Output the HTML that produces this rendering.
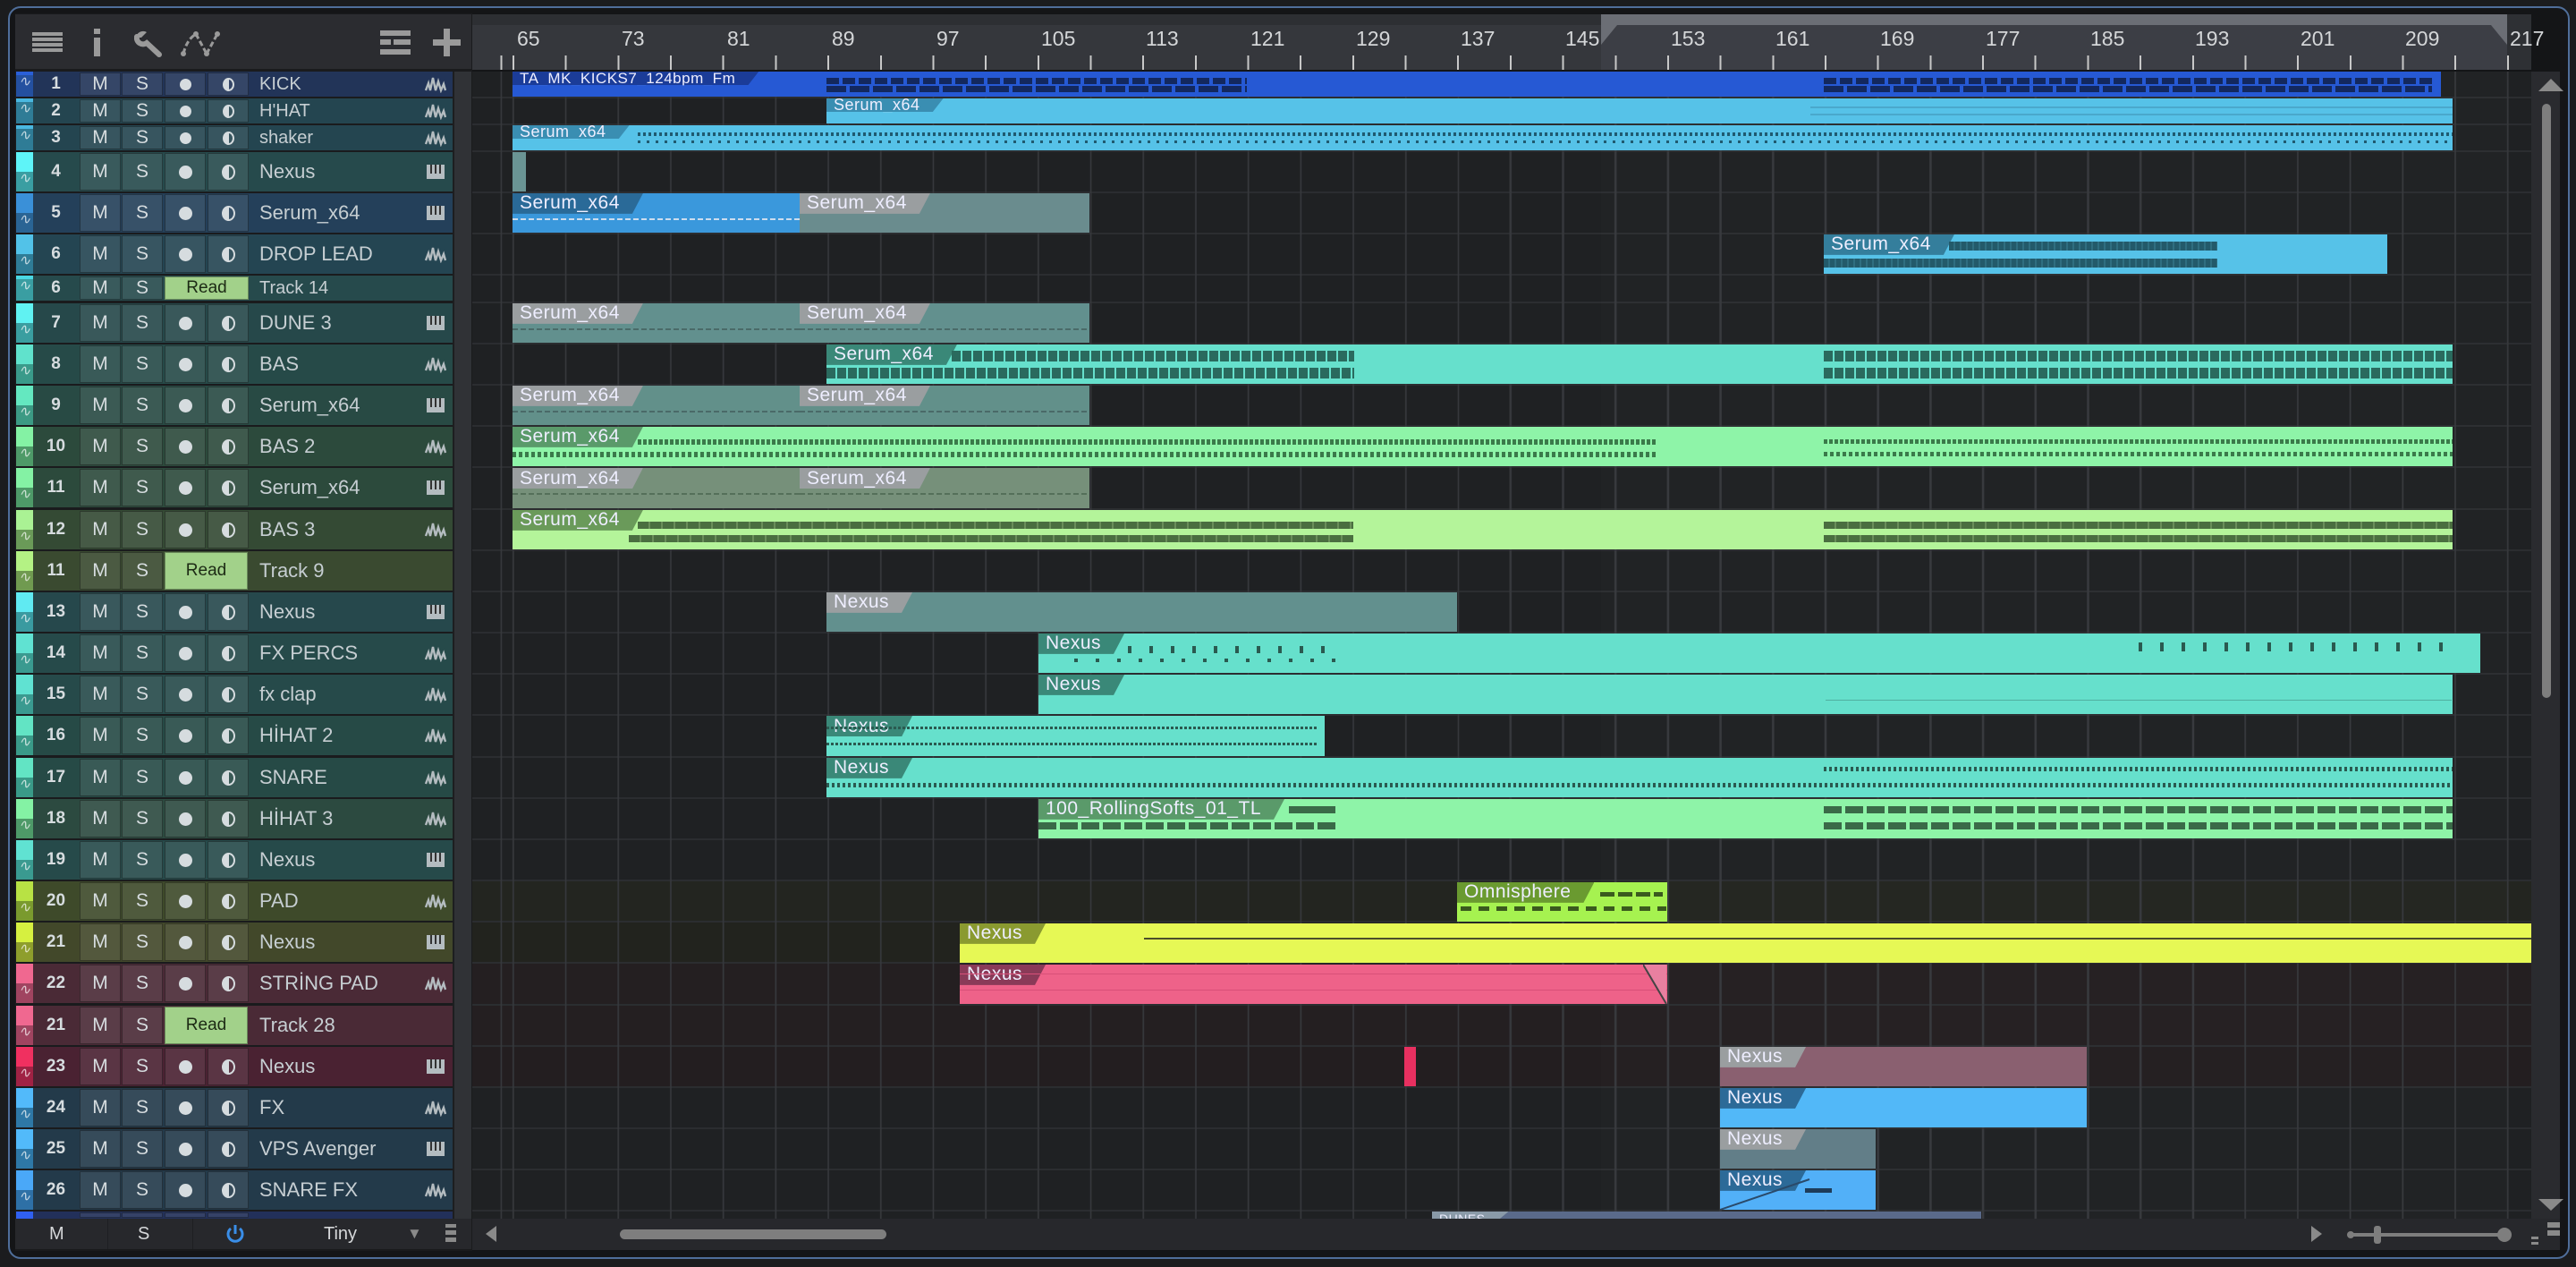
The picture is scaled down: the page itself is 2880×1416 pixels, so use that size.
<!DOCTYPE html>
<html><head><meta charset="utf-8"><style>
*{margin:0;padding:0;box-sizing:border-box}
body{width:2880px;height:1416px;background:#1b1c1e;position:relative;overflow:hidden;font-family:"Liberation Sans",sans-serif}
.a{position:absolute}
#frame{left:9px;top:7px;width:2864px;height:1400px;border:2px solid #4f6e9a;border-radius:14px;background:#141517}
#lp{left:17px;top:15px;width:511px;height:1383px;background:#1a1b1d}
#hd{left:17px;top:16px;width:510px;height:61px;background:#2b2c30}
.r{position:absolute;left:18px;width:488px;background:var(--b);color:#c9d0d4}
.r .st{position:absolute;left:0;top:0;width:19px;height:50%;background:var(--c)}
.r .sb{position:absolute;left:0;top:50%;width:19px;bottom:0;background:var(--d);color:rgba(255,255,255,.7);font-size:16px;line-height:100%;text-align:center}
.r.s .st{height:16%}.r.s .sb{top:16%}
.r .n{position:absolute;left:19px;width:51px;top:0;bottom:0;display:flex;align-items:center;justify-content:center;font-weight:bold;font-size:19px;color:#d6dcdf}
.r .bt{position:absolute;top:1px;bottom:1px;width:46px;background:rgba(255,255,255,.09);border:1px solid rgba(0,0,0,.35);display:flex;align-items:center;justify-content:center;font-size:21px;color:#d6dcdf}
.r .rd{background:#a2d18a;color:#1c2a14;width:94px;font-size:19px}
.dot{display:block;width:15px;height:15px;border-radius:50%;background:#d6dcdf}
.mon{display:block;width:15px;height:17px;border-radius:50%;border:2px solid #d6dcdf;background:linear-gradient(90deg,#d6dcdf 55%,transparent 55%)}
.r.s .dot{width:13px;height:13px}.r.s .mon{width:13px;height:15px}
.r .nm{position:absolute;left:272px;top:0;bottom:0;display:flex;align-items:center;font-size:22px;color:#c6ced2}
.r.s .nm{font-size:20px}.r.s .n{font-size:19px}
.r .ic{position:absolute;left:456px;top:50%;margin-top:-10px;width:26px;height:20px}
.sc{position:absolute;left:506px;width:21px;background:#303236;border-left:2px solid #1d1e20}
#ar{left:528px;top:80px;width:2302px;height:1282px;background:#1f2123;overflow:hidden}
.band{position:absolute;left:0;width:2302px;border-bottom:2px solid #2b2d30}
#grid{left:0;top:0;width:2302px;height:1282px;background:repeating-linear-gradient(90deg,#36383c 0 2px,transparent 2px 58.68px);background-position:45px 0}
.c{position:absolute;overflow:hidden}
.c .h{position:absolute;left:0;top:0;height:52%;padding:0 26px 0 8px;font-size:21px;color:#eef;display:flex;align-items:center;clip-path:polygon(0 0,100% 0,calc(100% - 12px) 100%,0 100%);white-space:nowrap;letter-spacing:.5px}
.s28 .h{font-size:18px;height:55%}
.w{position:absolute;height:7px}
#ru{left:528px;top:16px;width:2302px;height:62px;background:#35373c}
.rn{position:absolute;top:14px;font-size:23px;color:#d4d6d8}
</style></head><body>
<div id="frame" class="a"></div>
<div id="lp" class="a"></div>
<div id="hd" class="a">
<svg class="a" style="left:19px;top:20px" width="34" height="22"><g fill="#9a9a9a"><rect y="0" width="34" height="4"/><rect y="6" width="34" height="4"/><rect y="12" width="34" height="4"/><rect y="18" width="34" height="4"/></g></svg>
<svg class="a" style="left:88px;top:16px" width="8" height="31"><rect width="7" height="6" fill="#9a9a9a"/><rect y="10" width="7" height="21" fill="#9a9a9a"/></svg>
<svg class="a" style="left:133px;top:18px" width="32" height="30"><path d="M3 7a7 7 0 0 0 11 7l14 13" stroke="#9a9a9a" stroke-width="6" fill="none" stroke-linecap="round"/><path d="M2 8a8 8 0 0 1 12-6l-6 6z" fill="#9a9a9a"/></svg>
<svg class="a" style="left:184px;top:16px" width="48" height="32"><path d="M4 28Q8 12 18 6M18 6L30 28M30 28L42 6" stroke="#9a9a9a" stroke-width="3" fill="none" stroke-dasharray="6 3"/><g fill="#9a9a9a"><circle cx="4" cy="28" r="3"/><circle cx="18" cy="6" r="3"/><circle cx="30" cy="28" r="3"/><circle cx="42" cy="6" r="3"/></g></svg>
<svg class="a" style="left:408px;top:18px" width="34" height="27"><g fill="#9a9a9a"><rect width="34" height="6"/><rect y="10" width="12" height="6"/><rect x="15" y="10" width="19" height="6"/><rect y="21" width="34" height="6"/></g></svg>
<svg class="a" style="left:467px;top:16px" width="31" height="31"><rect x="12" width="7" height="31" fill="#9a9a9a"/><rect y="12" width="31" height="7" fill="#9a9a9a"/></svg>
</div>
<svg width="0" height="0" style="position:absolute"><defs>
<symbol id="aw" viewBox="0 0 26 20"><path d="M2 17L5 9L7 17L10 3L13 17L16 7L19 17L22 10L24 17" stroke="#b4bcc0" stroke-width="2.4" fill="none"/></symbol>
<symbol id="pi" viewBox="0 0 26 20"><rect x="3" y="2" width="20" height="16" fill="#b4bcc0"/><g stroke="#333" stroke-width="2"><path d="M8 2v10M13 2v10M18 2v10"/></g></symbol>
</defs></svg>

<div class="r s" style="top:80px;height:28px;--b:#223458;--c:#2a5fd8;--d:#2450a0"><i class="st"></i><i class="sb">∿</i><b class="n">1</b><span class="bt" style="left:71px">M</span><span class="bt" style="left:118px">S</span><span class="bt" style="left:166px"><i class="dot"></i></span><span class="bt" style="left:214px"><i class="mon"></i></span><span class="nm">KICK</span><svg class="ic"><use href="#aw"/></svg></div>
<div class="r s" style="top:110px;height:28px;--b:#244550;--c:#4ab8e0;--d:#2f7c96"><i class="st"></i><i class="sb">∿</i><b class="n">2</b><span class="bt" style="left:71px">M</span><span class="bt" style="left:118px">S</span><span class="bt" style="left:166px"><i class="dot"></i></span><span class="bt" style="left:214px"><i class="mon"></i></span><span class="nm">H'HAT</span><svg class="ic"><use href="#aw"/></svg></div>
<div class="r s" style="top:140px;height:28px;--b:#244550;--c:#4ab8e0;--d:#2f7c96"><i class="st"></i><i class="sb">∿</i><b class="n">3</b><span class="bt" style="left:71px">M</span><span class="bt" style="left:118px">S</span><span class="bt" style="left:166px"><i class="dot"></i></span><span class="bt" style="left:214px"><i class="mon"></i></span><span class="nm">shaker</span><svg class="ic"><use href="#aw"/></svg></div>
<div class="r" style="top:170px;height:44px;--b:#264a4c;--c:#5ef4f8;--d:#3a9ea2"><i class="st"></i><i class="sb">∿</i><b class="n">4</b><span class="bt" style="left:71px">M</span><span class="bt" style="left:118px">S</span><span class="bt" style="left:166px"><i class="dot"></i></span><span class="bt" style="left:214px"><i class="mon"></i></span><span class="nm">Nexus</span><svg class="ic"><use href="#pi"/></svg></div>
<div class="r" style="top:216px;height:44px;--b:#24405a;--c:#3a90d8;--d:#2a6494"><i class="st"></i><i class="sb">∿</i><b class="n">5</b><span class="bt" style="left:71px">M</span><span class="bt" style="left:118px">S</span><span class="bt" style="left:166px"><i class="dot"></i></span><span class="bt" style="left:214px"><i class="mon"></i></span><span class="nm">Serum_x64</span><svg class="ic"><use href="#pi"/></svg></div>
<div class="r" style="top:262px;height:44px;--b:#244552;--c:#52c2e8;--d:#2f7c96"><i class="st"></i><i class="sb">∿</i><b class="n">6</b><span class="bt" style="left:71px">M</span><span class="bt" style="left:118px">S</span><span class="bt" style="left:166px"><i class="dot"></i></span><span class="bt" style="left:214px"><i class="mon"></i></span><span class="nm">DROP LEAD</span><svg class="ic"><use href="#aw"/></svg></div>
<div class="r s" style="top:308px;height:28px;--b:#264a4c;--c:#4ad8e4;--d:#3a9ea2"><i class="st"></i><i class="sb">∿</i><b class="n">6</b><span class="bt" style="left:71px">M</span><span class="bt" style="left:118px">S</span><span class="bt rd" style="left:166px">Read</span><span class="nm">Track 14</span></div>
<div class="r" style="top:339px;height:44px;--b:#26484a;--c:#60f2f2;--d:#3a9ea0"><i class="st"></i><i class="sb">∿</i><b class="n">7</b><span class="bt" style="left:71px">M</span><span class="bt" style="left:118px">S</span><span class="bt" style="left:166px"><i class="dot"></i></span><span class="bt" style="left:214px"><i class="mon"></i></span><span class="nm">DUNE 3</span><svg class="ic"><use href="#pi"/></svg></div>
<div class="r" style="top:385px;height:44px;--b:#264a48;--c:#60e2cc;--d:#3a9a8a"><i class="st"></i><i class="sb">∿</i><b class="n">8</b><span class="bt" style="left:71px">M</span><span class="bt" style="left:118px">S</span><span class="bt" style="left:166px"><i class="dot"></i></span><span class="bt" style="left:214px"><i class="mon"></i></span><span class="nm">BAS</span><svg class="ic"><use href="#aw"/></svg></div>
<div class="r" style="top:431px;height:44px;--b:#284a44;--c:#64e8c0;--d:#3c9a84"><i class="st"></i><i class="sb">∿</i><b class="n">9</b><span class="bt" style="left:71px">M</span><span class="bt" style="left:118px">S</span><span class="bt" style="left:166px"><i class="dot"></i></span><span class="bt" style="left:214px"><i class="mon"></i></span><span class="nm">Serum_x64</span><svg class="ic"><use href="#pi"/></svg></div>
<div class="r" style="top:477px;height:44px;--b:#2c4a3c;--c:#84f2a4;--d:#4e9a68"><i class="st"></i><i class="sb">∿</i><b class="n">10</b><span class="bt" style="left:71px">M</span><span class="bt" style="left:118px">S</span><span class="bt" style="left:166px"><i class="dot"></i></span><span class="bt" style="left:214px"><i class="mon"></i></span><span class="nm">BAS 2</span><svg class="ic"><use href="#aw"/></svg></div>
<div class="r" style="top:523px;height:44px;--b:#2c4a3c;--c:#84f2a4;--d:#4e9a68"><i class="st"></i><i class="sb">∿</i><b class="n">11</b><span class="bt" style="left:71px">M</span><span class="bt" style="left:118px">S</span><span class="bt" style="left:166px"><i class="dot"></i></span><span class="bt" style="left:214px"><i class="mon"></i></span><span class="nm">Serum_x64</span><svg class="ic"><use href="#pi"/></svg></div>
<div class="r" style="top:570px;height:44px;--b:#344a34;--c:#aaf294;--d:#6a9a58"><i class="st"></i><i class="sb">∿</i><b class="n">12</b><span class="bt" style="left:71px">M</span><span class="bt" style="left:118px">S</span><span class="bt" style="left:166px"><i class="dot"></i></span><span class="bt" style="left:214px"><i class="mon"></i></span><span class="nm">BAS 3</span><svg class="ic"><use href="#aw"/></svg></div>
<div class="r" style="top:616px;height:44px;--b:#3a4a30;--c:#b4f284;--d:#709a50"><i class="st"></i><i class="sb">∿</i><b class="n">11</b><span class="bt" style="left:71px">M</span><span class="bt" style="left:118px">S</span><span class="bt rd" style="left:166px;width:93px">Read</span><span class="nm">Track 9</span></div>
<div class="r" style="top:662px;height:44px;--b:#26484c;--c:#60eaf2;--d:#3a9aa0"><i class="st"></i><i class="sb">∿</i><b class="n">13</b><span class="bt" style="left:71px">M</span><span class="bt" style="left:118px">S</span><span class="bt" style="left:166px"><i class="dot"></i></span><span class="bt" style="left:214px"><i class="mon"></i></span><span class="nm">Nexus</span><svg class="ic"><use href="#pi"/></svg></div>
<div class="r" style="top:708px;height:44px;--b:#264a4a;--c:#60e2d2;--d:#3a9a90"><i class="st"></i><i class="sb">∿</i><b class="n">14</b><span class="bt" style="left:71px">M</span><span class="bt" style="left:118px">S</span><span class="bt" style="left:166px"><i class="dot"></i></span><span class="bt" style="left:214px"><i class="mon"></i></span><span class="nm">FX PERCS</span><svg class="ic"><use href="#aw"/></svg></div>
<div class="r" style="top:754px;height:44px;--b:#264a4a;--c:#60e2d2;--d:#3a9a90"><i class="st"></i><i class="sb">∿</i><b class="n">15</b><span class="bt" style="left:71px">M</span><span class="bt" style="left:118px">S</span><span class="bt" style="left:166px"><i class="dot"></i></span><span class="bt" style="left:214px"><i class="mon"></i></span><span class="nm">fx clap</span><svg class="ic"><use href="#aw"/></svg></div>
<div class="r" style="top:800px;height:44px;--b:#264a46;--c:#62e4c4;--d:#3a9a88"><i class="st"></i><i class="sb">∿</i><b class="n">16</b><span class="bt" style="left:71px">M</span><span class="bt" style="left:118px">S</span><span class="bt" style="left:166px"><i class="dot"></i></span><span class="bt" style="left:214px"><i class="mon"></i></span><span class="nm">HİHAT 2</span><svg class="ic"><use href="#aw"/></svg></div>
<div class="r" style="top:847px;height:44px;--b:#264a46;--c:#62e4c4;--d:#3a9a88"><i class="st"></i><i class="sb">∿</i><b class="n">17</b><span class="bt" style="left:71px">M</span><span class="bt" style="left:118px">S</span><span class="bt" style="left:166px"><i class="dot"></i></span><span class="bt" style="left:214px"><i class="mon"></i></span><span class="nm">SNARE</span><svg class="ic"><use href="#aw"/></svg></div>
<div class="r" style="top:893px;height:44px;--b:#2c4a40;--c:#84f2a4;--d:#4e9a68"><i class="st"></i><i class="sb">∿</i><b class="n">18</b><span class="bt" style="left:71px">M</span><span class="bt" style="left:118px">S</span><span class="bt" style="left:166px"><i class="dot"></i></span><span class="bt" style="left:214px"><i class="mon"></i></span><span class="nm">HİHAT 3</span><svg class="ic"><use href="#aw"/></svg></div>
<div class="r" style="top:939px;height:44px;--b:#264a4a;--c:#60e2d2;--d:#3a9a90"><i class="st"></i><i class="sb">∿</i><b class="n">19</b><span class="bt" style="left:71px">M</span><span class="bt" style="left:118px">S</span><span class="bt" style="left:166px"><i class="dot"></i></span><span class="bt" style="left:214px"><i class="mon"></i></span><span class="nm">Nexus</span><svg class="ic"><use href="#pi"/></svg></div>
<div class="r" style="top:985px;height:44px;--b:#3e4a2a;--c:#b8e244;--d:#7a9a2e"><i class="st"></i><i class="sb">∿</i><b class="n">20</b><span class="bt" style="left:71px">M</span><span class="bt" style="left:118px">S</span><span class="bt" style="left:166px"><i class="dot"></i></span><span class="bt" style="left:214px"><i class="mon"></i></span><span class="nm">PAD</span><svg class="ic"><use href="#aw"/></svg></div>
<div class="r" style="top:1031px;height:44px;--b:#42482a;--c:#d6f040;--d:#8e9e2c"><i class="st"></i><i class="sb">∿</i><b class="n">21</b><span class="bt" style="left:71px">M</span><span class="bt" style="left:118px">S</span><span class="bt" style="left:166px"><i class="dot"></i></span><span class="bt" style="left:214px"><i class="mon"></i></span><span class="nm">Nexus</span><svg class="ic"><use href="#pi"/></svg></div>
<div class="r" style="top:1077px;height:44px;--b:#4a2a36;--c:#f06890;--d:#a04460"><i class="st"></i><i class="sb">∿</i><b class="n">22</b><span class="bt" style="left:71px">M</span><span class="bt" style="left:118px">S</span><span class="bt" style="left:166px"><i class="dot"></i></span><span class="bt" style="left:214px"><i class="mon"></i></span><span class="nm">STRİNG PAD</span><svg class="ic"><use href="#aw"/></svg></div>
<div class="r" style="top:1124px;height:44px;--b:#4a2a36;--c:#f06890;--d:#a04460"><i class="st"></i><i class="sb">∿</i><b class="n">21</b><span class="bt" style="left:71px">M</span><span class="bt" style="left:118px">S</span><span class="bt rd" style="left:166px;width:93px">Read</span><span class="nm">Track 28</span></div>
<div class="r" style="top:1170px;height:44px;--b:#4a2232;--c:#f03060;--d:#a02244"><i class="st"></i><i class="sb">∿</i><b class="n">23</b><span class="bt" style="left:71px">M</span><span class="bt" style="left:118px">S</span><span class="bt" style="left:166px"><i class="dot"></i></span><span class="bt" style="left:214px"><i class="mon"></i></span><span class="nm">Nexus</span><svg class="ic"><use href="#pi"/></svg></div>
<div class="r" style="top:1216px;height:44px;--b:#233a4a;--c:#52bafa;--d:#2e78a6"><i class="st"></i><i class="sb">∿</i><b class="n">24</b><span class="bt" style="left:71px">M</span><span class="bt" style="left:118px">S</span><span class="bt" style="left:166px"><i class="dot"></i></span><span class="bt" style="left:214px"><i class="mon"></i></span><span class="nm">FX</span><svg class="ic"><use href="#aw"/></svg></div>
<div class="r" style="top:1262px;height:44px;--b:#233a4a;--c:#52bafa;--d:#2e78a6"><i class="st"></i><i class="sb">∿</i><b class="n">25</b><span class="bt" style="left:71px">M</span><span class="bt" style="left:118px">S</span><span class="bt" style="left:166px"><i class="dot"></i></span><span class="bt" style="left:214px"><i class="mon"></i></span><span class="nm">VPS Avenger</span><svg class="ic"><use href="#pi"/></svg></div>
<div class="r" style="top:1308px;height:44px;--b:#233a4a;--c:#4aa8f8;--d:#2e70a6"><i class="st"></i><i class="sb">∿</i><b class="n">26</b><span class="bt" style="left:71px">M</span><span class="bt" style="left:118px">S</span><span class="bt" style="left:166px"><i class="dot"></i></span><span class="bt" style="left:214px"><i class="mon"></i></span><span class="nm">SNARE FX</span><svg class="ic"><use href="#aw"/></svg></div>
<div class="r" style="top:1354px;height:8px;--b:#22305a;--c:#3060f0;--d:#3060f0"><i class="st" style="height:100%"></i><span class="bt" style="left:71px"></span><span class="bt" style="left:118px"></span><span class="bt" style="left:166px"></span><span class="bt" style="left:214px"></span></div>
<div class="sc" style="top:80px;height:1282px"></div>

<div class="a" style="left:17px;top:1362px;width:510px;height:34px;background:#27282c;color:#d6d8da;font-size:20px">
<span class="a" style="left:38px;top:6px">M</span><span class="a" style="left:103px;top:0;width:1px;height:34px;background:#1e1f22"></span>
<span class="a" style="left:137px;top:6px">S</span><span class="a" style="left:198px;top:0;width:1px;height:34px;background:#1e1f22"></span>
<svg class="a" style="left:235px;top:5px" width="22" height="24"><path d="M6 6a8 8 0 1 0 10 0" stroke="#3a8ee8" stroke-width="3" fill="none"/><path d="M11 2v10" stroke="#3a8ee8" stroke-width="3"/></svg>
<span class="a" style="left:345px;top:6px">Tiny</span>
<span class="a" style="left:438px;top:7px;color:#8a8a8a;font-size:17px">▼</span>
<svg class="a" style="left:481px;top:6px" width="12" height="20"><g fill="#8a8a8a"><rect width="12" height="4"/><rect y="7" width="12" height="5"/><rect y="15" width="12" height="5"/></g></svg>
</div>

<div id="ru" class="a">
<div class="a" style="left:0;top:0;width:2302px;height:12px;background:#2d2f33"></div>
<div class="a" style="left:1262px;top:0;width:1013px;height:12px;background:#6b6e75"></div>
<div class="a" style="left:1262px;top:12px;width:1013px;height:50px;background:#3c3e45"></div>
<svg class="a" style="left:1262px;top:12px" width="18" height="22"><path d="M0 0H18L0 22Z" fill="#6b6e75"/></svg>
<svg class="a" style="left:2257px;top:12px" width="18" height="22"><path d="M0 0H18V22Z" fill="#6b6e75"/></svg>
<div class="a" style="left:2275px;top:0;width:27px;height:62px;background:#2e3034"></div>
<div class="a" style="left:0;top:46px;width:2302px;height:16px;background:repeating-linear-gradient(90deg,#c8c8c8 0 2px,transparent 2px 58.68px);background-position:45px 0"></div>
<span class="rn" style="left:50px">65</span><span class="rn" style="left:167px">73</span><span class="rn" style="left:285px">81</span><span class="rn" style="left:402px">89</span><span class="rn" style="left:519px">97</span><span class="rn" style="left:636px">105</span><span class="rn" style="left:753px">113</span><span class="rn" style="left:870px">121</span><span class="rn" style="left:988px">129</span><span class="rn" style="left:1105px">137</span><span class="rn" style="left:1222px">145</span><span class="rn" style="left:1340px">153</span><span class="rn" style="left:1457px">161</span><span class="rn" style="left:1574px">169</span><span class="rn" style="left:1692px">177</span><span class="rn" style="left:1809px">185</span><span class="rn" style="left:1926px">193</span><span class="rn" style="left:2044px">201</span><span class="rn" style="left:2161px">209</span><span class="rn" style="left:2278px">217</span>
</div>

<div id="ar" class="a">
<div class="band" style="top:0;height:30px"></div><div class="band" style="top:30px;height:30px"></div><div class="band" style="top:60px;height:30px"></div>
<div class="band" style="top:90px;height:46px"></div><div class="band" style="top:136px;height:46px"></div><div class="band" style="top:182px;height:46px"></div><div class="band" style="top:228px;height:31px"></div>
<div class="band" style="top:259px;height:46px"></div><div class="band" style="top:305px;height:46px"></div><div class="band" style="top:351px;height:46px"></div><div class="band" style="top:397px;height:46px"></div><div class="band" style="top:443px;height:47px"></div><div class="band" style="top:490px;height:46px"></div><div class="band" style="top:536px;height:46px"></div><div class="band" style="top:582px;height:46px"></div><div class="band" style="top:628px;height:46px"></div><div class="band" style="top:674px;height:46px"></div><div class="band" style="top:720px;height:47px"></div><div class="band" style="top:767px;height:46px"></div><div class="band" style="top:813px;height:46px"></div><div class="band" style="top:859px;height:46px"></div>
<div class="band" style="top:905px;height:46px;background:#232520"></div><div class="band" style="top:951px;height:46px;background:#22231e"></div><div class="band" style="top:997px;height:47px;background:#241f21"></div><div class="band" style="top:1044px;height:46px;background:#241f21"></div><div class="band" style="top:1090px;height:46px;background:#231e20"></div><div class="band" style="top:1136px;height:46px"></div><div class="band" style="top:1182px;height:46px"></div><div class="band" style="top:1228px;height:46px"></div>
<div id="grid" class="a"></div>
<div class="a" style="left:1262px;top:0;width:1013px;height:1282px;background:rgba(255,255,255,.012)"></div>

<div class="c s28" style="left:45px;top:0;width:2156px;height:28px;background:#2659d4"><div class="h" style="background:#1b3c98;font-size:17px">TA_MK_KICKS7_124bpm_Fm</div>
<div class="w" style="left:351px;top:7px;width:470px;background:repeating-linear-gradient(90deg,#13285e 0 14px,transparent 14px 18px)"></div><div class="w" style="left:351px;top:16px;width:470px;background:repeating-linear-gradient(90deg,#13285e 0 22px,transparent 22px 26px)"></div>
<div class="w" style="left:1466px;top:7px;width:680px;background:repeating-linear-gradient(90deg,#13285e 0 14px,transparent 14px 18px)"></div><div class="w" style="left:1466px;top:16px;width:680px;background:repeating-linear-gradient(90deg,#13285e 0 22px,transparent 22px 26px)"></div></div>
<div class="c s28" style="left:396px;top:30px;width:1818px;height:28px;background:#56c2e8"><div class="h" style="background:#3a8eb2">Serum_x64</div><div class="a" style="left:1100px;top:9px;width:720px;height:2px;background:#4aa8cc"></div><div class="a" style="left:1100px;top:17px;width:720px;height:2px;background:#4aa8cc"></div></div>
<div class="c s28" style="left:45px;top:60px;width:2169px;height:28px;background:#56c2e8"><div class="h" style="background:#3a8eb2">Serum_x64</div>
<div class="w" style="left:140px;top:8px;height:4px;width:2030px;background:repeating-linear-gradient(90deg,#1f5a70 0 3px,transparent 3px 6px)"></div><div class="w" style="left:140px;top:17px;height:3px;width:2030px;background:repeating-linear-gradient(90deg,#1f5a70 0 3px,transparent 3px 10px)"></div></div>
<div class="c" style="left:45px;top:90px;width:15px;height:44px;background:#6a9494"></div>
<div class="c" style="left:45px;top:136px;width:321px;height:44px;background:#3a98dc"><div class="h" style="background:#2a6a98">Serum_x64</div><div class="a" style="left:0;top:28px;width:321px;height:2px;background:repeating-linear-gradient(90deg,#cde 0 6px,transparent 6px 9px)"></div></div>
<div class="c" style="left:366px;top:136px;width:324px;height:44px;background:#6a8c8e"><div class="h" style="background:#9a9ea0">Serum_x64</div></div>
<div class="c" style="left:1511px;top:182px;width:630px;height:44px;background:#56c2e8"><div class="h" style="background:#347e9c">Serum_x64</div>
<div class="w" style="left:140px;top:8px;height:10px;width:300px;background:repeating-linear-gradient(90deg,#235a6a 0 5px,#2f6e80 5px 7px)"></div><div class="w" style="left:0;top:27px;height:10px;width:440px;background:repeating-linear-gradient(90deg,#235a6a 0 5px,#2f6e80 5px 7px)"></div></div>
<div class="c" style="left:45px;top:259px;width:321px;height:44px;background:#62908e"><div class="h" style="background:#9a9ea0">Serum_x64</div><div class="a" style="left:0;top:28px;width:321px;height:2px;background:repeating-linear-gradient(90deg,#4a6a68 0 6px,transparent 6px 9px)"></div></div>
<div class="c" style="left:366px;top:259px;width:324px;height:44px;background:#62908e"><div class="h" style="background:#9a9ea0">Serum_x64</div><div class="a" style="left:0;top:28px;width:324px;height:2px;background:repeating-linear-gradient(90deg,#4a6a68 0 6px,transparent 6px 9px)"></div></div>
<div class="c" style="left:396px;top:305px;width:1818px;height:44px;background:#66e0cc"><div class="h" style="background:#3a8878">Serum_x64</div>
<div class="w" style="left:140px;top:7px;height:12px;width:450px;background:repeating-linear-gradient(90deg,#2a6a5e 0 10px,transparent 10px 12px)"></div><div class="w" style="left:0;top:26px;height:12px;width:590px;background:repeating-linear-gradient(90deg,#2a6a5e 0 10px,transparent 10px 12px)"></div>
<div class="w" style="left:1115px;top:7px;height:12px;width:703px;background:repeating-linear-gradient(90deg,#2a6a5e 0 10px,transparent 10px 12px)"></div><div class="w" style="left:1115px;top:26px;height:12px;width:703px;background:repeating-linear-gradient(90deg,#2a6a5e 0 10px,transparent 10px 12px)"></div></div>
<div class="c" style="left:45px;top:351px;width:321px;height:44px;background:#62908a"><div class="h" style="background:#9a9ea0">Serum_x64</div><div class="a" style="left:0;top:28px;width:321px;height:2px;background:repeating-linear-gradient(90deg,#4a6a68 0 6px,transparent 6px 9px)"></div></div>
<div class="c" style="left:366px;top:351px;width:324px;height:44px;background:#62908a"><div class="h" style="background:#9a9ea0">Serum_x64</div><div class="a" style="left:0;top:28px;width:324px;height:2px;background:repeating-linear-gradient(90deg,#4a6a68 0 6px,transparent 6px 9px)"></div></div>
<div class="c" style="left:45px;top:397px;width:2169px;height:44px;background:#8ef4a8"><div class="h" style="background:#5a9a6a">Serum_x64</div>
<div class="w" style="left:140px;top:14px;height:6px;width:1140px;background:repeating-linear-gradient(90deg,#3a7a4a 0 4px,transparent 4px 6px)"></div><div class="w" style="left:0;top:28px;height:6px;width:1280px;background:repeating-linear-gradient(90deg,#3a7a4a 0 4px,transparent 4px 7px)"></div>
<div class="w" style="left:1466px;top:14px;height:5px;width:703px;background:repeating-linear-gradient(90deg,#3a7a4a 0 4px,transparent 4px 6px)"></div><div class="w" style="left:1466px;top:28px;height:5px;width:703px;background:repeating-linear-gradient(90deg,#3a7a4a 0 4px,transparent 4px 7px)"></div></div>
<div class="c" style="left:45px;top:443px;width:321px;height:45px;background:#76907a"><div class="h" style="background:#9a9ea0">Serum_x64</div><div class="a" style="left:0;top:28px;width:321px;height:2px;background:repeating-linear-gradient(90deg,#55705a 0 6px,transparent 6px 9px)"></div></div>
<div class="c" style="left:366px;top:443px;width:324px;height:45px;background:#76907a"><div class="h" style="background:#9a9ea0">Serum_x64</div><div class="a" style="left:0;top:28px;width:324px;height:2px;background:repeating-linear-gradient(90deg,#55705a 0 6px,transparent 6px 9px)"></div></div>
<div class="c" style="left:45px;top:490px;width:2169px;height:44px;background:#b4f49a"><div class="h" style="background:#6a9a5a">Serum_x64</div>
<div class="w" style="left:140px;top:13px;height:8px;width:800px;background:repeating-linear-gradient(90deg,#4a6e40 0 12px,#6a8e5a 12px 14px)"></div><div class="w" style="left:130px;top:28px;height:8px;width:810px;background:repeating-linear-gradient(90deg,#4a6e40 0 12px,#6a8e5a 12px 14px)"></div>
<div class="w" style="left:1466px;top:13px;height:8px;width:703px;background:repeating-linear-gradient(90deg,#4a6e40 0 12px,#6a8e5a 12px 14px)"></div><div class="w" style="left:1466px;top:28px;height:8px;width:703px;background:repeating-linear-gradient(90deg,#4a6e40 0 12px,#6a8e5a 12px 14px)"></div></div>
<div class="c" style="left:396px;top:582px;width:705px;height:44px;background:#62908e"><div class="h" style="background:#9a9ea0">Nexus</div></div>
<div class="c" style="left:633px;top:628px;width:1612px;height:44px;background:#66e0cc"><div class="h" style="background:#3a8878">Nexus</div>
<div class="w" style="left:100px;top:14px;height:8px;width:240px;background:repeating-linear-gradient(90deg,#2a5a50 0 4px,transparent 4px 24px)"></div><div class="w" style="left:40px;top:28px;height:4px;width:300px;background:repeating-linear-gradient(90deg,#2a5a50 0 4px,transparent 4px 24px)"></div>
<div class="w" style="left:1230px;top:10px;height:10px;width:360px;background:repeating-linear-gradient(90deg,#2a5a50 0 4px,transparent 4px 24px)"></div></div>
<div class="c" style="left:633px;top:674px;width:1581px;height:44px;background:#66e0cc"><div class="h" style="background:#3a8878">Nexus</div><div class="a" style="left:880px;top:28px;width:700px;height:1px;background:#50b0a0"></div></div>
<div class="c" style="left:396px;top:720px;width:557px;height:45px;background:#66e0cc"><div class="h" style="background:#3a8878">Nexus</div><div class="w" style="left:0;top:12px;height:3px;width:550px;background:repeating-linear-gradient(90deg,#2a5a50 0 3px,transparent 3px 5px)"></div><div class="w" style="left:0;top:30px;height:3px;width:550px;background:repeating-linear-gradient(90deg,#2a5a50 0 3px,transparent 3px 5px)"></div></div>
<div class="c" style="left:396px;top:767px;width:1818px;height:44px;background:#66e0cc"><div class="h" style="background:#3a8878">Nexus</div><div class="w" style="left:0;top:28px;height:5px;width:1818px;background:repeating-linear-gradient(90deg,#2a5a50 0 3px,transparent 3px 6px)"></div><div class="w" style="left:1115px;top:10px;height:5px;width:703px;background:repeating-linear-gradient(90deg,#2a5a50 0 3px,transparent 3px 6px)"></div></div>
<div class="c" style="left:633px;top:813px;width:1581px;height:44px;background:#8ef4a8"><div class="h" style="background:#5a9a6a">100_RollingSofts_01_TL</div>
<div class="w" style="left:280px;top:8px;height:8px;width:52px;background:#3a6a48"></div><div class="w" style="left:0;top:26px;height:8px;width:332px;background:repeating-linear-gradient(90deg,#3a6a48 0 20px,transparent 20px 24px)"></div>
<div class="w" style="left:878px;top:8px;height:8px;width:703px;background:repeating-linear-gradient(90deg,#3a6a48 0 20px,transparent 20px 24px)"></div><div class="w" style="left:878px;top:26px;height:8px;width:703px;background:repeating-linear-gradient(90deg,#3a6a48 0 20px,transparent 20px 24px)"></div></div>
<div class="c" style="left:1101px;top:906px;width:235px;height:44px;background:#a6f250"><div class="h" style="background:#6a9a30">Omnisphere</div>
<div class="w" style="left:160px;top:11px;height:5px;width:70px;background:repeating-linear-gradient(90deg,#3a5a1e 0 16px,transparent 16px 20px)"></div><div class="w" style="left:4px;top:27px;height:5px;width:230px;background:repeating-linear-gradient(90deg,#3a5a1e 0 12px,transparent 12px 20px)"></div></div>
<div class="c" style="left:545px;top:952px;width:2284px;height:44px;background:#e6f855"><div class="h" style="background:#8a9a30">Nexus</div><div class="a" style="left:206px;top:16px;width:1720px;height:2px;background:#4a4e2a"></div></div>
<div class="c" style="left:545px;top:998px;width:791px;height:44px;background:#ee6289"><div class="h" style="background:#8a3a58">Nexus</div><div class="a" style="left:0;top:10px;width:791px;height:1px;background:#d85078"></div><div class="a" style="left:0;top:28px;width:791px;height:1px;background:#d85078"></div>
<svg class="a" style="left:764px;top:0" width="27" height="44"><path d="M0 0L26 44V0Z" fill="#e880a0"/><path d="M0 0L26 44" stroke="#444" stroke-width="2"/></svg></div>
<div class="c" style="left:1042px;top:1090px;width:13px;height:44px;background:#e83060"></div>
<div class="c" style="left:1395px;top:1090px;width:410px;height:44px;background:#8a6070"><div class="h" style="background:#9a9ea0">Nexus</div></div>
<div class="c" style="left:1395px;top:1136px;width:410px;height:44px;background:#52b8f8"><div class="h" style="background:#2c6a98">Nexus</div></div>
<div class="c" style="left:1395px;top:1182px;width:174px;height:44px;background:#627e88"><div class="h" style="background:#9a9ea0">Nexus</div></div>
<div class="c" style="left:1395px;top:1228px;width:174px;height:44px;background:#52b0f8"><div class="h" style="background:#2c6a98">Nexus</div><svg class="a" style="left:0;top:0" width="174" height="44"><path d="M0 44L100 10" stroke="#2a4a6a" stroke-width="2"/><rect x="95" y="20" width="30" height="5" fill="#1e3c5a"/></svg></div>
<div class="c" style="left:1073px;top:1274px;width:614px;height:10px;background:#5a6a8a"><div class="h" style="background:#8a9aa8;height:10px;font-size:14px;align-items:flex-start">DUNES</div></div>
</div>

<div class="a" style="left:2830px;top:80px;width:32px;height:1282px;background:#2a2b2f"></div>
<svg class="a" style="left:2838px;top:88px" width="28" height="14"><path d="M0 14L14 0L28 14Z" fill="#8a8a8a"/></svg>
<div class="a" style="left:2842px;top:116px;width:10px;height:664px;background:#7e7e7e;border-radius:5px"></div>
<svg class="a" style="left:2838px;top:1340px" width="28" height="13"><path d="M0 0L28 0L14 13Z" fill="#8a8a8a"/></svg>

<div class="a" style="left:528px;top:1362px;width:2334px;height:35px;background:#27282c"></div>
<svg class="a" style="left:543px;top:1370px" width="12" height="18"><path d="M12 0L0 9L12 18Z" fill="#8a8a8a"/></svg>
<div class="a" style="left:693px;top:1374px;width:298px;height:11px;background:#7e7e7e;border-radius:6px"></div>
<svg class="a" style="left:2584px;top:1370px" width="12" height="18"><path d="M0 0L12 9L0 18Z" fill="#8a8a8a"/></svg>
<div class="a" style="left:2627px;top:1378px;width:175px;height:4px;background:#7e7e7e"></div>
<div class="a" style="left:2624px;top:1376px;width:8px;height:8px;border-radius:4px;background:#7e7e7e"></div>
<div class="a" style="left:2654px;top:1370px;width:8px;height:20px;border-radius:3px;background:#7e7e7e"></div>
<div class="a" style="left:2792px;top:1372px;width:16px;height:16px;border-radius:8px;background:#7e7e7e"></div>
<svg class="a" style="left:2828px;top:1366px" width="36" height="26"><g fill="#8a8a8a"><rect x="20" width="14" height="6"/><rect x="20" y="9" width="14" height="6"/><rect x="2" y="16" width="8" height="3"/><rect x="2" y="22" width="8" height="3"/></g></svg>
</body></html>
